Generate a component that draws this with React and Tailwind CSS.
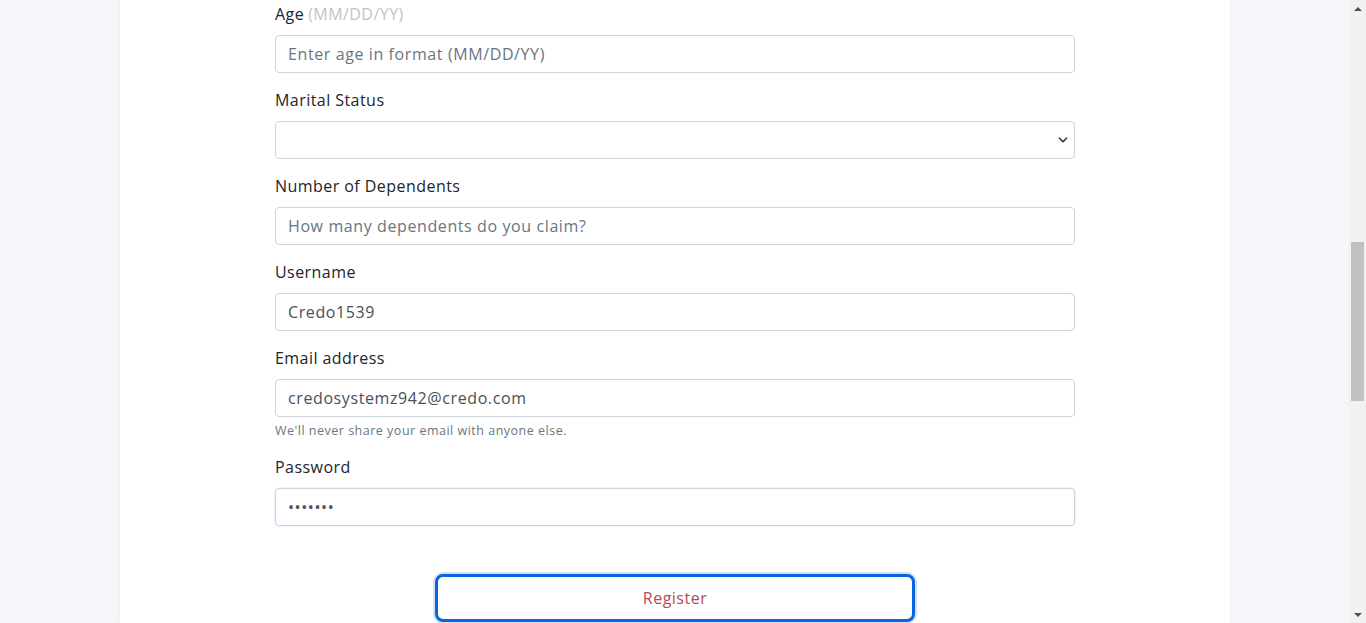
import { ChevronDown } from 'lucide-react';

const inputBase =
    'block w-full h-[38px] rounded-[4px] border border-[#ced4da] bg-white px-3 text-[16px] tracking-[0.6px] text-[#495057] placeholder:text-[#6c757d] outline-none';

function Field({ label, hint, children, help }) {
    return (
        <div className="flex flex-col">
            <label className="mb-[9px] text-[16px] leading-[23px] tracking-[0.45px] text-[#212529]">
                {label}
                {hint && <span className="ml-1 text-[#c3c3c3]">{hint}</span>}
            </label>
            {children}
            {help && <small className="mt-1 text-[12.5px] leading-[19px] tracking-[0.5px] text-[#6c757d]">{help}</small>}
        </div>
    );
}

function Scrollbar() {
    return (
        <div className="flex w-[17px] flex-col items-center bg-[#f1f1f1]">
            <div className="flex h-[17px] items-center justify-center">
                <div className="h-0 w-0 border-x-[4px] border-b-[4px] border-x-transparent border-b-[#505050]" />
            </div>
            <div className="flex-1 w-full px-[2px] pt-[225px]">
                <div className="h-[159px] w-full bg-[#c1c1c1]" />
            </div>
            <div className="flex h-[17px] items-center justify-center">
                <div className="h-0 w-0 border-x-[4px] border-t-[4px] border-x-transparent border-t-[#505050]" />
            </div>
        </div>
    );
}

export default function App() {
    return (
        <div className="flex h-[623px] w-full overflow-hidden bg-[#f4f6fa]" style={{ fontFamily: '"Open Sans", sans-serif' }}>
            <div className="flex flex-1 justify-center pl-[120px] pr-[119px]">
                <div className="flex w-full justify-center bg-white shadow-[0_0_2px_rgba(0,0,0,0.06)]">
                    <form className="flex w-[800px] flex-col gap-4 pt-[3px]">
                        <Field label="Age" hint="(MM/DD/YY)">
                            <input className={inputBase} placeholder="Enter age in format (MM/DD/YY)" />
                        </Field>
                        <Field label="Marital Status">
                            <div className="relative">
                                <select className={inputBase + ' appearance-none'} defaultValue="">
                                    <option value="" />
                                </select>
                                <ChevronDown className="pointer-events-none absolute right-[5px] top-[12px] h-[14px] w-[14px] text-[#343a40]" strokeWidth={3} />
                            </div>
                        </Field>
                        <Field label="Number of Dependents">
                            <input className={inputBase} placeholder="How many dependents do you claim?" />
                        </Field>
                        <Field label="Username">
                            <input className={inputBase} defaultValue="Credo1539" />
                        </Field>
                        <Field label="Email address" help="We'll never share your email with anyone else.">
                            <input className={inputBase} defaultValue="credosystemz942@credo.com" />
                        </Field>
                        <Field label="Password">
                            <input
                                type="password"
                                className={inputBase + ' border-[#9ec5f0] shadow-[0_0_0_1px_rgba(128,189,255,0.15)]'}
                                defaultValue="1234567"
                            />
                        </Field>
                        <div className="flex justify-center pt-8">
                            <button
                                type="button"
                                className="h-[48px] w-[480px] rounded-[8px] border-[3px] border-[#0a64dc] bg-white text-[16px] tracking-[0.5px] text-[#b54a55] shadow-[0_0_0_2px_rgba(120,170,240,0.35)]"
                            >
                                Register
                            </button>
                        </div>
                    </form>
                </div>
            </div>
            <Scrollbar />
        </div>
    );
}
